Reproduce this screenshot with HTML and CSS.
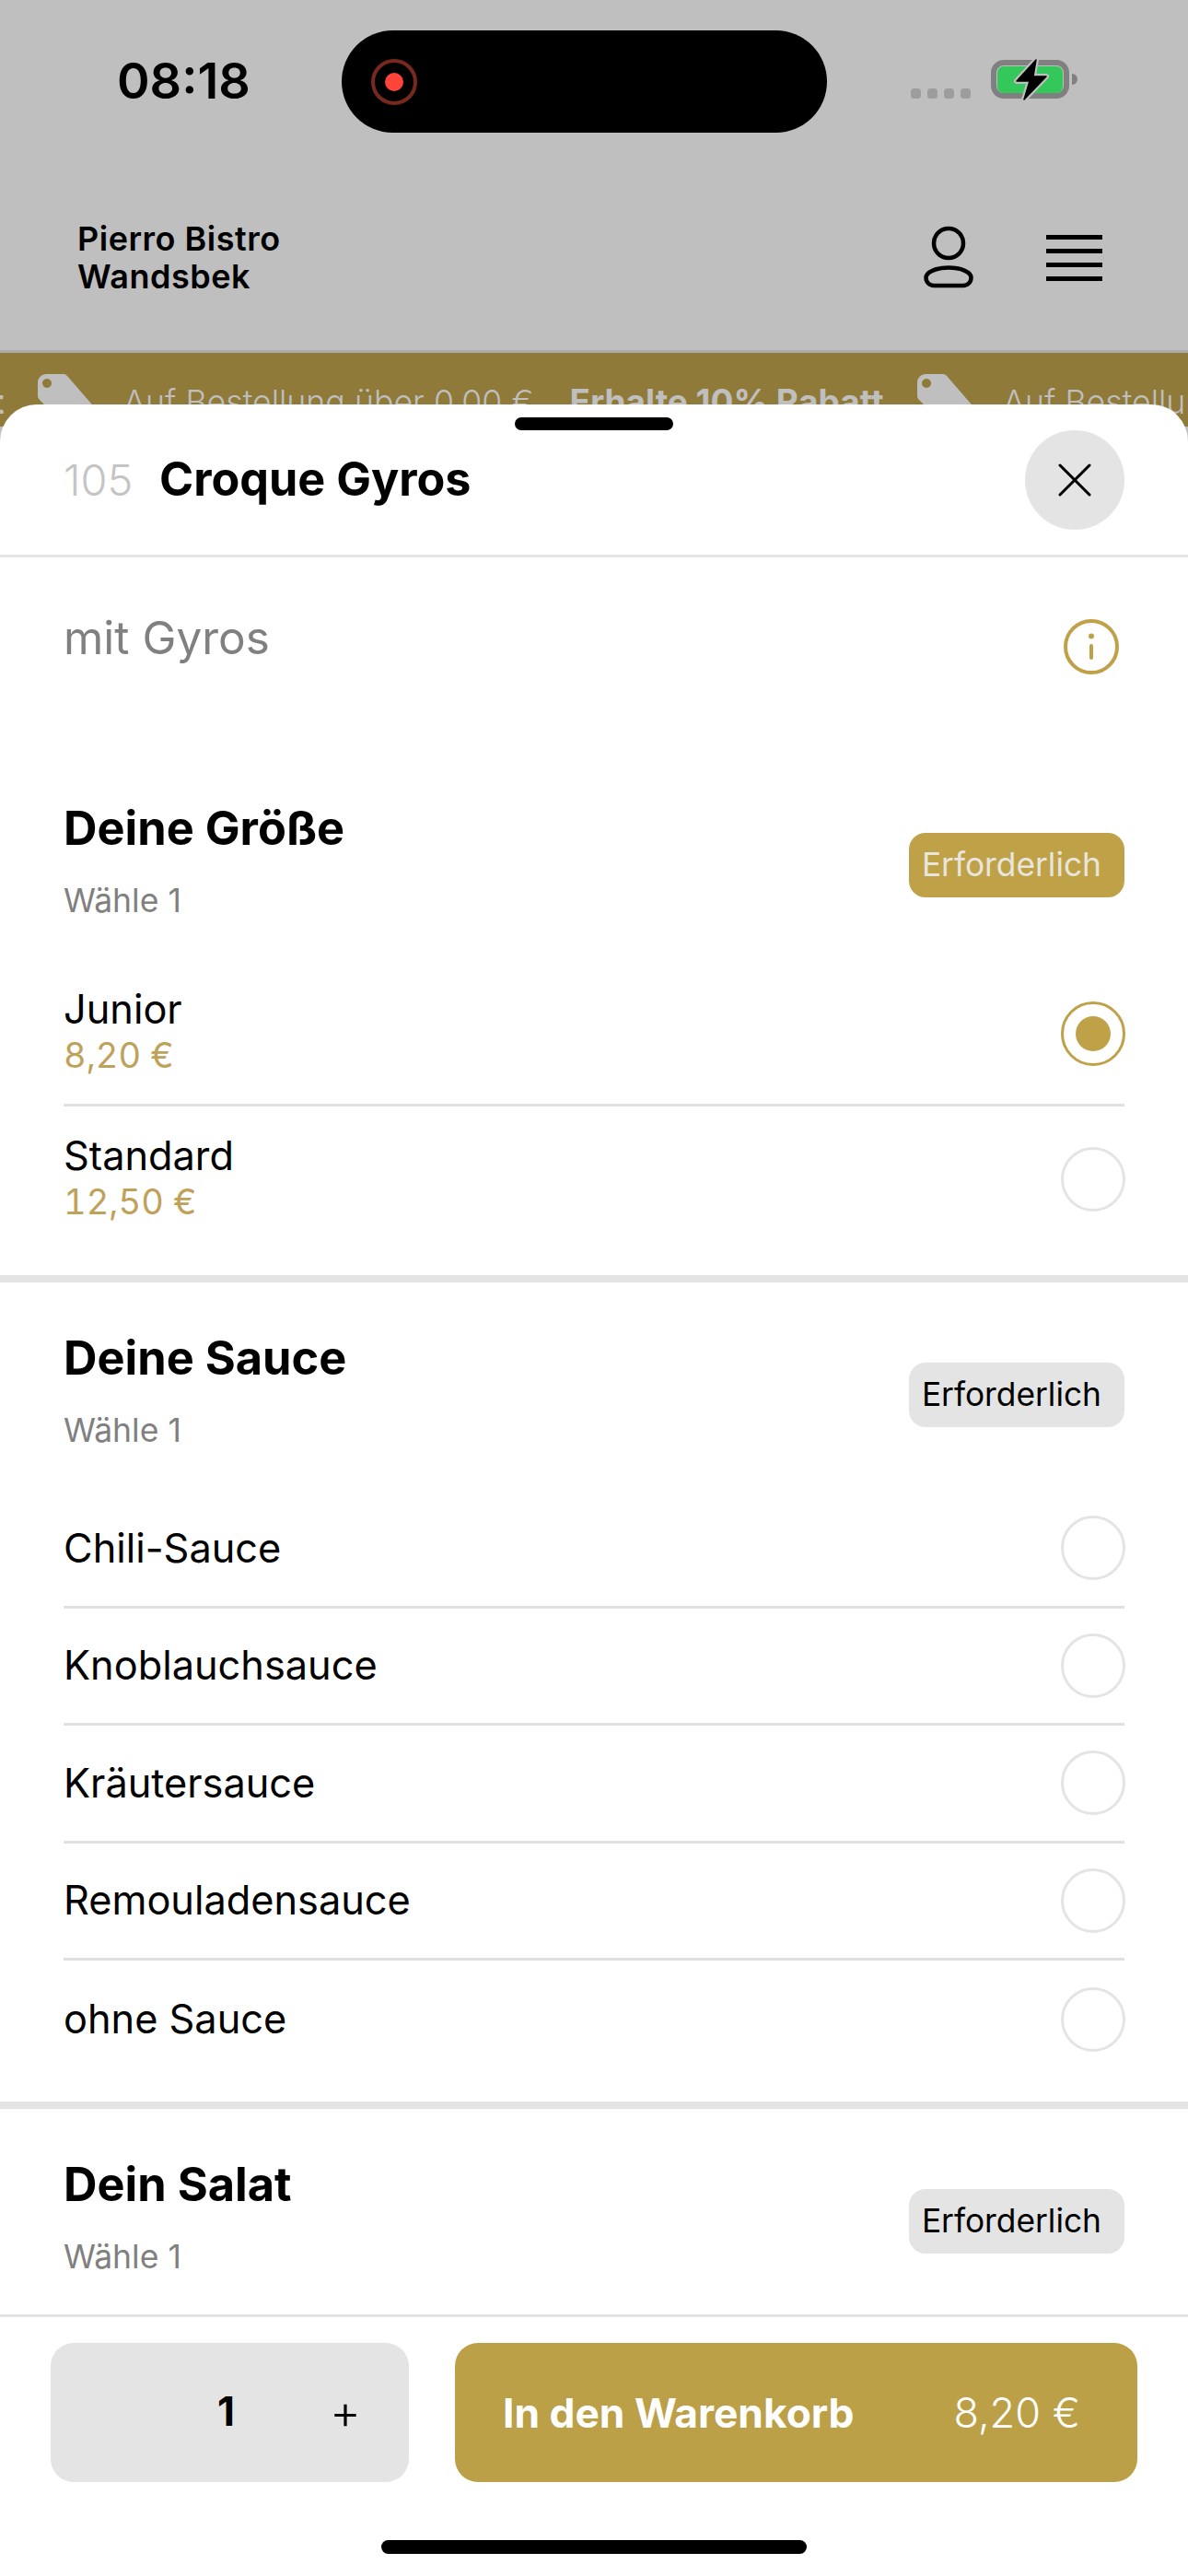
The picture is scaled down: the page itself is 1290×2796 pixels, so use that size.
FILE: index.html
```html
<!DOCTYPE html>
<html lang="de">
<head>
    <meta charset="UTF-8">
    <meta name="viewport" content="width=device-width, initial-scale=1.0">
    <title>Croque Gyros - Pierro Bistro Wandsbek</title>
    <link rel="stylesheet" href="styles.css">
</head>
<body>
    <div class="phone">
        <div class="status-bar">
            <div class="time">08:18</div>
            <div class="island">
                <span class="record-ring"><span class="record-dot"></span></span>
            </div>
            <div class="status-right">
                <div class="signal"><span></span><span></span><span></span><span></span></div>
                <svg class="battery" width="100" height="50" viewBox="0 0 100 50">
                    <rect x="5" y="6" width="79" height="36" rx="11" fill="none" stroke="#808080" stroke-width="6"/>
                    <rect x="9" y="10" width="71" height="29" rx="7" fill="#34c759"/>
                    <path d="M90 18a6 6 0 0 1 0 12z" fill="#808080"/>
                    <path d="M51 3 30 26h14l-6 20 24-25H48z" fill="#000" stroke="#bfbfbf" stroke-width="6" stroke-linejoin="round" paint-order="stroke"/>
                    <path d="M51 3 30 26h14l-6 20 24-25H48z" fill="#000" stroke="#000" stroke-width="1.5" stroke-linejoin="round"/>
                </svg>
            </div>
        </div>

        <header class="top-bar">
            <div class="shop-name">Pierro Bistro<br>Wandsbek</div>
            <div class="top-icons">
                <svg width="58" height="70" viewBox="0 0 58 70" fill="none" stroke="#000" stroke-width="4.5">
                    <circle cx="29" cy="19" r="16"/>
                    <path d="M13 65h32a8.5 8.5 0 0 0 8.5-8.5C53.500 50 42 45.500 29 45.500S4.500 50 4.500 56.500A8.500 8.500 0 0 0 13 65z"/>
                </svg>
                <div class="burger"><span></span><span></span><span></span><span></span></div>
            </div>
        </header>

        <div class="banner">
            <div class="banner-track">
                <div class="banner-item">
                    <svg class="tag" width="60" height="60" viewBox="0 0 60 60"><path fill-rule="evenodd" d="M0 9a9 9 0 0 1 9-9h18a6 6 0 0 1 5 2l26 30a6 6 0 0 1 0 8L40 58a6 6 0 0 1-8 0L2 28a6 6 0 0 1-2-5zM10 5a5 5 0 1 0 .01 0z" fill="#bfbfbf"/></svg>
                    <span>Auf Bestellung über 0,00 €</span>
                    <b>Erhalte 10% Rabatt</b>
                </div>
                <div class="banner-item">
                    <svg class="tag" width="60" height="60" viewBox="0 0 60 60"><path fill-rule="evenodd" d="M0 9a9 9 0 0 1 9-9h18a6 6 0 0 1 5 2l26 30a6 6 0 0 1 0 8L40 58a6 6 0 0 1-8 0L2 28a6 6 0 0 1-2-5zM10 5a5 5 0 1 0 .01 0z" fill="#bfbfbf"/></svg>
                    <span>Auf Bestellung über 0,00 €</span>
                    <b>Erhalte 10% Rabatt</b>
                </div>
                <div class="banner-item">
                    <svg class="tag" width="60" height="60" viewBox="0 0 60 60"><path fill-rule="evenodd" d="M0 9a9 9 0 0 1 9-9h18a6 6 0 0 1 5 2l26 30a6 6 0 0 1 0 8L40 58a6 6 0 0 1-8 0L2 28a6 6 0 0 1-2-5zM10 5a5 5 0 1 0 .01 0z" fill="#bfbfbf"/></svg>
                    <span>Auf Bestellung über 0,00 €</span>
                    <b>Erhalte 10% Rabatt</b>
                </div>
            </div>
        </div>

        <!-- Bottom sheet over the shop page -->
        <div class="sheet">
            <span class="handle"></span>
            <div class="sheet-head">
                <span class="item-no">105</span>
                <h1>Croque Gyros</h1>
                <button class="close-btn" type="button" aria-label="Schließen">
                    <svg width="36" height="36" viewBox="0 0 36 36" fill="none" stroke="#000" stroke-width="3" stroke-linecap="round"><path d="M2 2l32 32M34 2 2 34"/></svg>
                </button>
            </div>

            <div class="sheet-body">
                <div class="description">
                    <p>mit Gyros</p>
                    <svg width="62" height="62" viewBox="0 0 62 62" fill="none" stroke="#bfa148" stroke-width="4" stroke-linecap="round">
                        <circle cx="31" cy="31" r="28"/>
                        <path d="M31 30v13"/>
                        <circle cx="31" cy="19.500" r="1.500" stroke-width="3" fill="#bfa148"/>
                    </svg>
                </div>

                <section class="group">
                    <div class="group-head">
                        <div>
                            <h2>Deine Größe</h2>
                            <p class="hint">Wähle 1</p>
                        </div>
                        <span class="badge badge-active">Erforderlich</span>
                    </div>
                    <div class="option option-price">
                        <div class="option-text">
                            <div class="option-name">Junior</div>
                            <div class="option-price-text">8,20 €</div>
                        </div>
                        <span class="radio radio-on"></span>
                    </div>
                    <div class="option option-price">
                        <div class="option-text">
                            <div class="option-name">Standard</div>
                            <div class="option-price-text">12,50 €</div>
                        </div>
                        <span class="radio"></span>
                    </div>
                </section>

                <section class="group">
                    <div class="group-head">
                        <div>
                            <h2>Deine Sauce</h2>
                            <p class="hint">Wähle 1</p>
                        </div>
                        <span class="badge">Erforderlich</span>
                    </div>
                    <div class="option"><div class="option-name">Chili-Sauce</div><span class="radio"></span></div>
                    <div class="option"><div class="option-name">Knoblauchsauce</div><span class="radio"></span></div>
                    <div class="option"><div class="option-name">Kräutersauce</div><span class="radio"></span></div>
                    <div class="option"><div class="option-name">Remouladensauce</div><span class="radio"></span></div>
                    <div class="option"><div class="option-name">ohne Sauce</div><span class="radio"></span></div>
                </section>

                <section class="group">
                    <div class="group-head">
                        <div>
                            <h2>Dein Salat</h2>
                            <p class="hint">Wähle 1</p>
                        </div>
                        <span class="badge">Erforderlich</span>
                    </div>
                </section>
            </div>

            <footer class="sheet-foot">
                <div class="foot-row">
                    <div class="stepper">
                        <span class="qty">1</span>
                        <span class="plus">+</span>
                    </div>
                    <button class="cart-btn" type="button">
                        <b>In den Warenkorb</b>
                        <span>8,20 €</span>
                    </button>
                </div>
                <div class="home-bar"></div>
            </footer>
        </div>
    </div>
</body>
</html>
```

FILE: styles.css
```css
* {
    box-sizing: border-box;
}
body {
    margin: 0;
    font-family: Inter, "Liberation Sans", sans-serif;
    color: #000;
    background-color: #bfbfbf;
}
h1, h2, p {
    margin: 0;
}
button {
    font-family: inherit;
    border: none;
    padding: 0;
}
.phone {
    position: relative;
    width: 1290px;
    height: 2796px;
    overflow: hidden;
}

/* status bar */
.status-bar {
    display: flex;
    height: 180px;
    padding-top: 33px;
}
.time {
    width: 371px;
    padding-left: 127px;
    font-size: 54px;
    font-weight: 600;
    line-height: 109px;
}
.island {
    display: flex;
    align-items: center;
    width: 527px;
    height: 111px;
    padding-left: 32px;
    background-color: #000;
    border-radius: 56px;
}
.record-ring {
    display: flex;
    align-items: center;
    justify-content: center;
    width: 50px;
    height: 50px;
    border: 4px solid #78291f;
    border-radius: 50%;
}
.record-dot {
    width: 20px;
    height: 20px;
    background-color: #ff453a;
    border-radius: 50%;
}
.status-right {
    display: flex;
    margin-left: 91px;
    margin-top: 29px;
}
.signal {
    display: flex;
    gap: 7px;
    margin-top: 34px;
}
.signal span {
    width: 11px;
    height: 11px;
    background-color: #9d9d9d;
    border-radius: 3.5px;
}
.battery {
    margin-left: 20px;
}

/* shop header */
.top-bar {
    display: flex;
    align-items: center;
    justify-content: space-between;
    height: 203px;
    padding: 0 93px 0 84px;
    border-bottom: 3px solid #ababab;
}
.shop-name {
    font-size: 36px;
    font-weight: 600;
    line-height: 41px;
    letter-spacing: 0.5px;
}
.top-icons {
    display: flex;
    align-items: center;
    gap: 77px;
}
.burger {
    display: flex;
    flex-direction: column;
    gap: 10px;
    width: 61px;
}
.burger span {
    height: 5px;
    background-color: #000;
}

/* promo strip, mostly behind the sheet */
.banner {
    height: 80px;
    overflow: hidden;
    background-color: #907a39;
    color: #bfbfbf;
}
.banner-track {
    display: flex;
    margin-left: -914px;
    padding-top: 23px;
}
.banner-item {
    display: flex;
    flex: none;
    width: 955px;
    font-size: 35.7px;
    font-weight: 300;
    line-height: 60px;
    white-space: nowrap;
}
.banner-item span {
    margin-left: 33px;
}
.banner-item b {
    margin-left: 39px;
    font-size: 37px;
    font-weight: 700;
}
.tag {
    flex: none;
}

/* bottom sheet */
.sheet {
    position: absolute;
    top: 439px;
    left: 0;
    right: 0;
    bottom: 0;
    display: flex;
    flex-direction: column;
    background-color: #fff;
    border-radius: 40px 40px 0 0;
}
.handle {
    position: absolute;
    top: 14px;
    left: 559px;
    width: 172px;
    height: 14px;
    background-color: #000;
    border-radius: 7px;
}
.sheet-head {
    display: flex;
    align-items: center;
    flex: none;
    height: 166px;
    padding: 0 69px;
    border-bottom: 3px solid #e4e4e4;
}
.item-no {
    width: 104px;
    font-size: 47px;
    font-weight: 300;
    color: #c4c4c4;
}
.sheet-head h1 {
    flex: 1;
    margin-top: -2px;
    font-size: 50.3px;
    font-weight: 700;
}
.close-btn {
    display: flex;
    align-items: center;
    justify-content: center;
    width: 108px;
    height: 108px;
    background-color: #e4e4e4;
    border-radius: 50%;
}
.sheet-body {
    flex: 1;
    overflow: hidden;
}
.description {
    display: flex;
    justify-content: space-between;
    height: 212px;
    padding: 58px 74px 0 69px;
}
.description p {
    font-size: 49.5px;
    font-weight: 400;
    line-height: 58px;
    color: #808080;
}
.description svg {
    margin-top: 8px;
}

/* option groups */
.group {
    padding: 0 69px 25px;
    border-bottom: 8px solid #e4e4e4;
}
.group:last-child {
    border-bottom: none;
}
.group-head {
    display: flex;
    justify-content: space-between;
    height: 226px;
    padding-top: 52px;
}
.group-head h2 {
    font-size: 50.5px;
    font-weight: 700;
    line-height: 60px;
}
.hint {
    margin-top: 29px;
    font-size: 35.5px;
    line-height: 40px;
    color: #808080;
}
.badge {
    height: 70px;
    margin-top: 35px;
    padding: 0 25px 0 14px;
    font-size: 35.3px;
    line-height: 70px;
    background-color: #e4e4e4;
    border-radius: 18px;
}
.badge-active {
    color: #e8e6dc;
    background-color: #bfa148;
}
.option {
    display: flex;
    align-items: center;
    justify-content: space-between;
    height: 127.5px;
    border-bottom: 3px solid #e0e0e0;
}
.option:last-child {
    border-bottom: none;
}
.option-price {
    height: 158px;
}
.option-text {
    margin-bottom: 3px;
}
.option-name {
    font-size: 43.3px;
    line-height: 51px;
}
.option-price-text {
    font-size: 38px;
    line-height: 48px;
    font-variant-numeric: tabular-nums;
    color: #bfa25a;
}
.radio {
    display: flex;
    align-items: center;
    justify-content: center;
    flex: none;
    width: 70px;
    height: 70px;
    margin-right: -1px;
    border: 3px solid #e4e4e4;
    border-radius: 50%;
}
.radio-on {
    margin-top: 2px;
    border-color: #bfa148;
}
.radio-on::after {
    content: "";
    width: 38px;
    height: 38px;
    background-color: #bfa148;
    border-radius: 50%;
}

/* footer */
.sheet-foot {
    flex: none;
    height: 284px;
    padding-top: 28px;
    background-color: #fff;
    border-top: 3px solid #e4e4e4;
}
.foot-row {
    display: flex;
    gap: 50px;
    padding: 0 55px;
}
.stepper {
    display: flex;
    align-items: center;
    justify-content: flex-end;
    gap: 103px;
    width: 389px;
    height: 151px;
    padding-right: 52px;
    background-color: #e4e4e4;
    border-radius: 25px;
}
.qty {
    margin-bottom: 3px;
    font-size: 44px;
    font-weight: 700;
}
.plus {
    margin-bottom: 3px;
    font-size: 52px;
    font-weight: 300;
}
.cart-btn {
    display: flex;
    align-items: center;
    justify-content: space-between;
    flex: 1;
    height: 151px;
    padding: 0 62px 0 52px;
    color: #fff;
    background-color: #bca047;
    border-radius: 25px;
}
.cart-btn b {
    font-size: 44.3px;
    font-weight: 700;
}
.cart-btn span {
    font-size: 45px;
    font-weight: 300;
}
.home-bar {
    width: 462px;
    height: 15px;
    margin: 63px auto 0;
    background-color: #000;
    border-radius: 8px;
}
```
